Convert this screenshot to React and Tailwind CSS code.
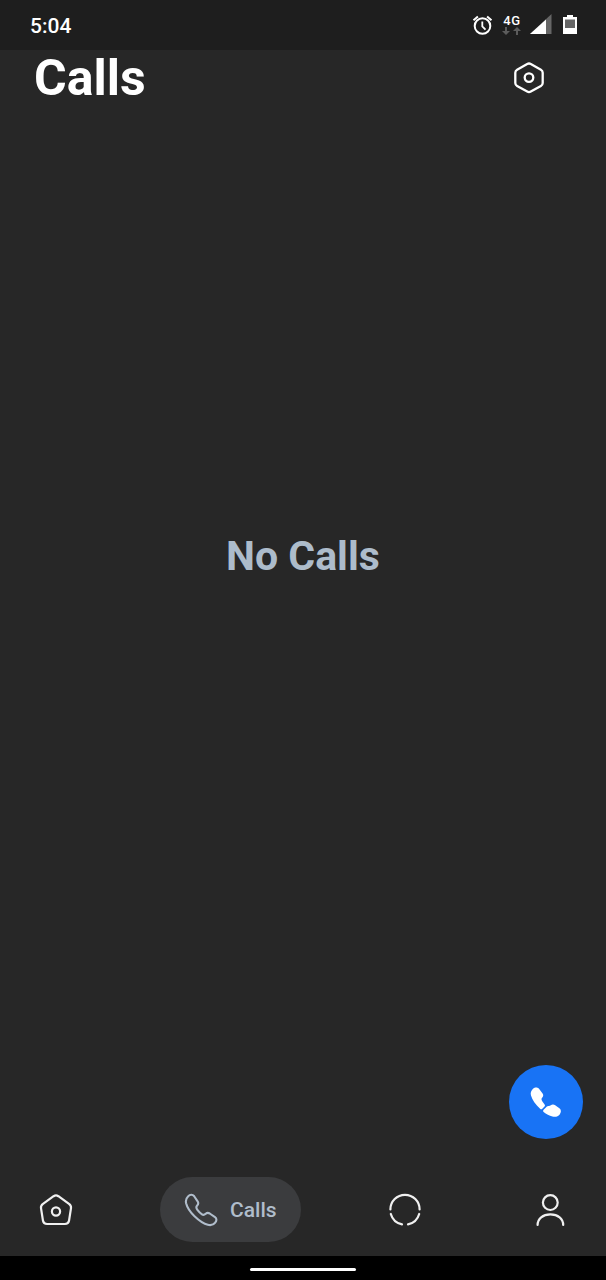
const tabButton = "flex h-[65px] items-center text-[#f0f0f0]";

function StatusBar() {
  return (
    <div className="flex h-[50px] items-center justify-between bg-[#1e1e1e] pr-7 pl-[30px] text-white">
      <span className="pt-[2px] text-[21px] leading-6 font-medium">5:04</span>
      <div className="flex items-center">
        <svg className="mr-2 h-6 w-[22px]" viewBox="0 0 22 24" fill="none" stroke="currentColor" strokeWidth="2" aria-hidden="true">
          <circle cx="10.5" cy="13" r="7.8" />
          <path d="M1.5 7.2 5.9 3.4M19.5 7.2 15.1 3.4" />
          <path d="M10.3 8.4v5l3.2 3.2" strokeWidth="1.8" />
        </svg>
        <div className="mr-2 flex w-5 flex-col items-center">
          <span className="text-[13px] leading-[13px] font-medium tracking-wider">4G</span>
          <svg className="h-[10px] w-5" viewBox="0 0 20 10" fill="#5c5c5c" aria-hidden="true">
            <path d="M3 0h2v4h3L4 8 0 4h3zM14 8h2V4h3l-4-4-4 4h3z" />
          </svg>
        </div>
        <svg className="mr-[10px] h-6 w-[22px]" viewBox="0 0 22 24" aria-hidden="true">
          <path d="M0 21 21.5 1v20z" fill="#666" />
          <path d="M0 21 16 6.5V21z" fill="#fff" />
        </svg>
        <svg className="h-6 w-4" viewBox="0 0 16 24" aria-hidden="true">
          <path d="M5 2h6v2h4v17H1V4h4z" fill="#fff" />
          <path d="M3 6.5h10v8.5H3z" fill="#666" />
        </svg>
      </div>
    </div>
  );
}

function Header() {
  return (
    <header className="flex h-14 items-center justify-between pr-[60px] pl-[34px]">
      <h1 className="text-[50px] leading-[56px] font-bold text-white">Calls</h1>
      <button type="button" aria-label="Settings" className="text-white">
        <svg className="h-[34px] w-[34px]" viewBox="0 0 34 34" fill="none" stroke="currentColor" strokeWidth="2.3" strokeLinejoin="round">
          <path d="M15.2 3q1.8-1 3.6 0L28.9 8.7q1.8 1 1.8 3v10.2q0 2-1.8 3L18.8 30.6q-1.8 1-3.6 0L5.1 24.9q-1.8-1-1.8-3V11.7q0-2 1.8-3z" />
          <circle cx="17" cy="16.6" r="4.3" />
        </svg>
      </button>
    </header>
  );
}

function TabBar() {
  return (
    <nav className="flex h-[93px] items-center justify-between px-[39px]">
      <button type="button" aria-label="Home" className={tabButton}>
        <svg className="h-[34px] w-[34px]" viewBox="0 0 34 34" fill="none" stroke="currentColor" strokeWidth="2.2" strokeLinejoin="round">
          <path d="M14.6 3.2q2.4-1.5 4.8 0L30 10.8q2.4 1.7 2 4.3L30 27.8Q29.4 31 26 31H8q-3.4 0-4-3.2L2 15.1q-.4-2.6 2-4.3z" />
          <circle cx="17" cy="18.5" r="4.1" />
        </svg>
      </button>
      <button type="button" aria-current="page" className="flex h-[65px] w-[141px] items-center gap-3 rounded-full bg-[#3b3c3e] pl-6 text-[#b0bdcb]">
        <svg className="h-[34px] w-[34px]" viewBox="0 0 34 34" fill="none" stroke="currentColor" strokeWidth="2.1" strokeLinejoin="round">
          <path d="M4.2 3.2C6 1.4 8.6 1.3 10 3L13.6 8.4C14.8 10.2 14.6 11 13.2 12.4C11.7 13.9 12 15 13.4 16.9C14.8 18.8 16.3 20.2 18 21.4C19.5 22.5 20.4 22 21.7 20.8C23 19.6 24.3 19.6 25.7 20.5L31 24.2C33 25.6 32.7 27.6 31.2 29.6C29.6 31.8 27.2 32.6 23.8 31.8C19.6 30.8 14.4 27 10.5 23.3C6.4 19.3 3.2 14.6 2.1 10.3C1.4 7.2 2.2 5.1 4.2 3.2Z" />
        </svg>
        <span className="text-[21px] leading-6 font-medium">Calls</span>
      </button>
      <button type="button" aria-label="Status" className={tabButton}>
        <svg className="h-[34px] w-[34px]" viewBox="0 0 34 34" fill="none" stroke="currentColor" strokeWidth="2.2" strokeLinecap="round">
          <path d="M2.4 16.4a14.6 14.6 0 0 1 29.2 0" />
          <path d="M2.8 21A14.8 14.8 0 0 0 14 31.4" />
          <path d="M31.2 21A14.8 14.8 0 0 1 20 31.4" />
        </svg>
      </button>
      <button type="button" aria-label="Profile" className="flex h-[65px] items-center pl-6 text-[#f0f0f0]">
        <svg className="h-[34px] w-[34px]" viewBox="0 0 34 34" fill="none" stroke="currentColor" strokeWidth="2.2" strokeLinecap="round">
          <circle cx="17.3" cy="9.6" r="7.4" />
          <path d="M4.6 32C4.6 25.6 9.8 21.4 17.4 21.4S30.2 25.6 30.2 32" />
        </svg>
      </button>
    </nav>
  );
}

export default function App() {
  return (
    <div className="flex min-h-screen flex-col bg-[#272727] font-['Roboto',sans-serif]">
      <StatusBar />
      <Header />
      <main className="relative flex flex-1 items-center justify-center pb-[158px]">
        <p className="text-[41px] leading-[48px] font-bold text-[#adbccb]">No Calls</p>
        <button type="button" aria-label="New call" className="absolute right-[23px] bottom-6 flex size-[74px] items-center justify-center rounded-full bg-[#1873f5] text-white">
          <svg className="size-8" viewBox="0 0 32 32" fill="currentColor">
            <path d="M3 2.8C4.8.9 7.8.9 9.2 2.9L12.6 7.6C13.8 9.4 13.2 10.6 11.9 12C11.1 13 11.6 14.2 12.4 15.4L14.6 18.4Q15.5 19.6 14.5 20.6L12.3 22.8Q11.3 23.8 10.1 22.8C5.6 18.8 2.2 14 .9 9.3C.3 6.6 1.2 4.6 3 2.8Z" />
            <path d="M13.6 23.8 16.9 20.5Q17.7 19.8 18.7 20C20.5 20.1 21.2 18.3 23 18.4Q24.2 18.5 25.2 19.2L29.4 22.2C31.5 23.8 31.2 26.4 29.7 28.4C28 30.6 25.7 31.3 22.4 30.6C19.4 29.9 16.2 28.2 13.6 26.1Q12.4 25 13.6 23.8Z" />
          </svg>
        </button>
      </main>
      <TabBar />
      <div className="flex h-6 items-center justify-center bg-black pt-[2px]">
        <div className="h-[3px] w-[106px] rounded-full bg-white" />
      </div>
    </div>
  );
}
